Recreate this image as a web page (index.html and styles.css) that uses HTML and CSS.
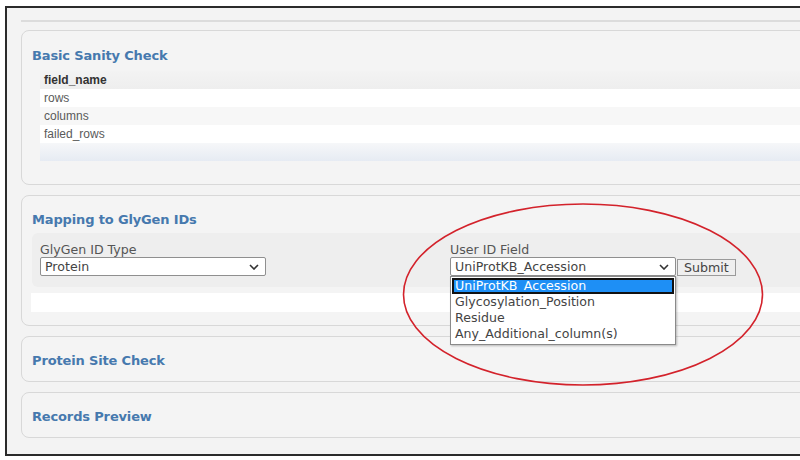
FILE: index.html
```html
<!DOCTYPE html>
<html>
<head>
<meta charset="utf-8">
<link rel="stylesheet" href="styles.css">
</head>
<body>
<div class="frame">
  <div class="prev-rule"></div>

  <section class="panel panel-sanity">
    <h2 class="panel-title">Basic Sanity Check</h2>
    <div class="table">
      <div class="row head">field_name</div>
      <div class="row odd">rows</div>
      <div class="row even">columns</div>
      <div class="row odd">failed_rows</div>
      <div class="row foot"></div>
    </div>
  </section>

  <section class="panel panel-mapping">
    <h2 class="panel-title">Mapping to GlyGen IDs</h2>
    <div class="form-area">
      <div class="field">
        <div class="label">GlyGen ID Type</div>
        <div class="select">
          <span>Protein</span>
          <svg class="chev" width="10" height="6" viewBox="0 0 10 6"><path d="M1 1 L5 5 L9 1" fill="none" stroke="#333" stroke-width="1.6"/></svg>
        </div>
      </div>
      <div class="field">
        <div class="label">User ID Field</div>
        <div class="select-line">
          <div class="select">
            <span>UniProtKB_Accession</span>
            <svg class="chev" width="10" height="6" viewBox="0 0 10 6"><path d="M1 1 L5 5 L9 1" fill="none" stroke="#333" stroke-width="1.6"/></svg>
            <div class="dropdown">
              <div class="opt selected">UniProtKB_Accession</div>
              <div class="opt">Glycosylation_Position</div>
              <div class="opt">Residue</div>
              <div class="opt">Any_Additional_column(s)</div>
            </div>
          </div>
          <div class="button">Submit</div>
        </div>
      </div>
    </div>
    <div class="white-strip"></div>
  </section>

  <section class="panel panel-small">
    <h2 class="panel-title">Protein Site Check</h2>
  </section>

  <section class="panel panel-small">
    <h2 class="panel-title">Records Preview</h2>
  </section>
</div>

<svg class="ellipse" width="800" height="460" viewBox="0 0 800 460">
  <ellipse cx="583" cy="294.5" rx="179.5" ry="90.5" fill="none" stroke="#d3222b" stroke-width="1.6"/>
</svg>
</body>
</html>
```

FILE: styles.css
```css
html, body {
  margin: 0;
  padding: 0;
  background: #ffffff;
  overflow: hidden;
  width: 800px;
  height: 460px;
}

.frame {
  margin: 6px 0 0 5px;
  width: 795px;
  height: 450px;
  box-sizing: border-box;
  border: 2px solid #2b2b2b;
  border-right: none;
  background: #f3f3f3;
  padding: 0 0 0 14px;
  display: flex;
  flex-direction: column;
  overflow: hidden;
}

.prev-rule {
  flex: none;
  height: 12px;
  border-bottom: 2px solid #dcdcdc;
  margin-right: -30px;
}

.panel {
  flex: none;
  background: #f4f4f4;
  border: 1px solid #d8d8d8;
  border-radius: 8px;
  margin-top: 10px;
  margin-right: -30px;
  padding: 0 0 0 10px;
}

.panel-title {
  margin: 0;
  font-family: "DejaVu Sans", Verdana, sans-serif;
  font-weight: bold;
  font-size: 13px;
  color: #4679ae;
  letter-spacing: -0.15px;
}

.panel-sanity {
  margin-top: 8px;
  height: 155px;
  box-sizing: border-box;
  padding-top: 17px;
}

.table {
  margin: 8px 0 0 8px;
  font-family: "Liberation Sans", Arial, sans-serif;
  font-size: 12px;
  color: #5a5a5a;
}

.row {
  height: 18px;
  line-height: 18px;
  padding-left: 4px;
}

.row.head {
  font-weight: bold;
  color: #333;
  background: linear-gradient(#f3f3f3, #eeeeee);
}

.row.odd { background: #ffffff; }
.row.even { background: #f7f7f7; }

.row.foot {
  background: linear-gradient(#f6f7f9, #e6ebf3);
}

.panel-mapping {
  height: 131px;
  box-sizing: border-box;
  padding-top: 16px;
}

.form-area {
  margin: 6px 0 0 0;
  height: 54px;
  background: #eeeeee;
  border-radius: 6px 0 0 6px;
  display: grid;
  grid-template-columns: 410px 1fr;
  padding: 9px 0 0 8px;
  box-sizing: border-box;
  font-family: "DejaVu Sans", Verdana, sans-serif;
  font-size: 12.6px;
  color: #555;
}

.label {
  height: 15px;
  line-height: 15px;
  color: #555;
}

.select-line {
  display: flex;
  align-items: flex-start;
}

.select {
  position: relative;
  width: 226px;
  height: 19px;
  box-sizing: border-box;
  border: 1px solid #8f8f8f;
  border-radius: 2px;
  background: #ffffff;
  line-height: 17px;
  padding-left: 4px;
  color: #444;
  display: flex;
  align-items: center;
  justify-content: space-between;
  padding-right: 6px;
}

.select span { line-height: 17px; }

.chev { flex: none; }

.button {
  margin: 2px 0 0 1px;
  height: 17px;
  box-sizing: border-box;
  border: 1px solid #9a9a9a;
  background: #efefef;
  color: #444;
  line-height: 15px;
  padding: 0 6px;
  font-size: 12.6px;
}

.dropdown {
  position: absolute;
  left: -1px;
  top: 18px;
  width: 226px;
  box-sizing: border-box;
  border: 1px solid #8a8a8a;
  background: #ffffff;
  box-shadow: 1px 1px 2px rgba(0,0,0,0.25);
  padding: 1px 0 2px 0;
  z-index: 2;
}

.opt {
  height: 16px;
  line-height: 16px;
  padding-left: 4px;
  color: #444;
}

.opt.selected {
  background: #1e8ff5;
  color: #ffffff;
  outline: 2px solid #111;
  outline-offset: -2px;
  margin: 0 1px;
  padding-left: 3px;
}

.white-strip {
  height: 19px;
  margin-top: 6px;
  background: #ffffff;
  margin-left: -1px;
}

.panel-small {
  height: 46px;
  box-sizing: border-box;
  display: flex;
  align-items: center;
  padding-top: 3px;
}

.ellipse {
  position: absolute;
  left: 0;
  top: 0;
  pointer-events: none;
}
```
